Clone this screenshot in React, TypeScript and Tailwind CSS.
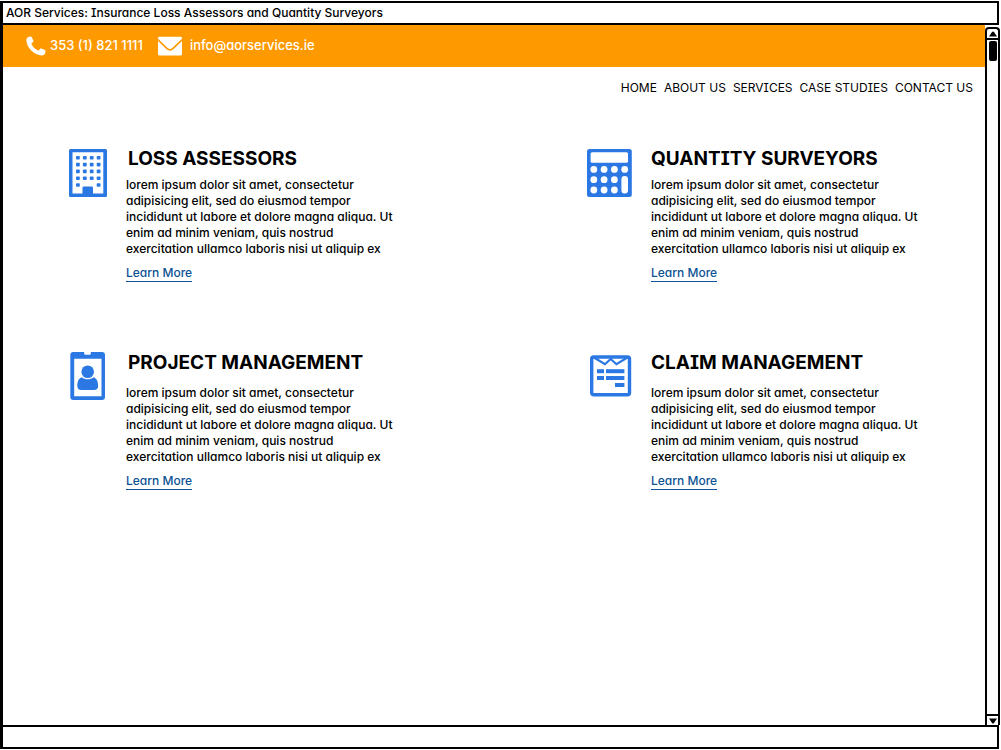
import type { ReactNode } from 'react';

const BLUE = '#2b78e4';

function BuildingIcon() {
  const windows: ReactNode[] = [];
  for (let row = 0; row < 5; row++) {
    for (let col = 0; col < 4; col++) {
      if (row === 4 && (col === 1 || col === 2)) continue;
      windows.push(
        <rect key={`${row}-${col}`} x={14 + col * 6.9} y={8 + row * 6.8} width="3.8" height="3.6" rx="0.8" fill={BLUE} />,
      );
    }
  }
  return (
    <svg viewBox="0 0 52 52" className="mt-px size-[52px] shrink-0" aria-hidden="true">
      <path fillRule="evenodd" fill={BLUE} d="M8.5 1h35A1.5 1.5 0 0 1 45 2.5v45a1.5 1.5 0 0 1-1.5 1.5h-35A1.5 1.5 0 0 1 7 47.5v-45A1.5 1.5 0 0 1 8.5 1zM10.5 4.200v41.300h10v-6a1 1 0 0 1 1-1h8.500a1 1 0 0 1 1 1v6h10.300V4.200z" />
      {windows}
    </svg>
  );
}

function CalculatorIcon() {
  const keys: ReactNode[] = [];
  for (let row = 0; row < 3; row++) {
    for (let col = 0; col < 4; col++) {
      if (col === 3 && row > 0) continue;
      keys.push(<circle key={`${row}-${col}`} cx={6.8 + col * 10.3} cy={21.4 + row * 10.3} r="3.4" fill="#fff" />);
    }
  }
  return (
    <svg viewBox="0 0 52 52" className="mt-px size-[52px] shrink-0" aria-hidden="true">
      <rect x="0" y="1" width="44.8" height="48" rx="2.5" fill={BLUE} />
      <rect x="3.6" y="4.2" width="37.4" height="10.6" rx="1.5" fill="#fff" />
      {keys}
      <rect x="34.4" y="28" width="6.6" height="17.4" rx="3.2" fill="#fff" />
    </svg>
  );
}

function BadgeIcon() {
  return (
    <svg viewBox="0 0 52 52" className="size-[52px] shrink-0" aria-hidden="true">
      <path fillRule="evenodd" fill={BLUE} d="M11 1h11.200v1.700a1 1 0 0 0 1 1h4.600a1 1 0 0 0 1-1V1H40a3 3 0 0 1 3 3v42a3 3 0 0 1-3 3H11.300a3 3 0 0 1-3-3V4a3 3 0 0 1 2.700-3zM12.200 7.800v37.400h27.300V7.800z" />
      <circle cx="25.7" cy="20.7" r="6.3" fill={BLUE} />
      <path fill={BLUE} d="M19.800 26.200c3.400 2.700 8.400 2.700 11.800 0 3.100 1 4.500 4.200 4.500 8.700 0 2.500-1.500 4-4 4H19.300c-2.500 0-4-1.500-4-4 0-4.500 1.400-7.700 4.500-8.700z" />
    </svg>
  );
}

function ClaimIcon() {
  return (
    <svg viewBox="0 0 52 52" className="size-[52px] shrink-0" aria-hidden="true">
      <rect x="4.7" y="6" width="37.8" height="37.8" rx="2" fill="none" stroke={BLUE} strokeWidth="3.4" />
      <path d="M6.500 6.200l11.500 7 5.700-5.200 5.700 5.200 11.500-7" fill="none" stroke={BLUE} strokeWidth="2.2" />
      <g fill={BLUE}>
        <rect x="10" y="18.2" width="7" height="4" />
        <rect x="19" y="18.2" width="18.4" height="4" />
        <rect x="10" y="25" width="7" height="4" />
        <rect x="19" y="25" width="18.4" height="4" />
        <rect x="28" y="32" width="9.4" height="4" />
      </g>
    </svg>
  );
}

function PhoneIcon() {
  return (
    <svg viewBox="0 0 20 20" className="size-5" aria-hidden="true">
      <path fill="#fff" d="M4.300.5c.6-.2 1 0 1.300.5l1.800 3.600c.3.600.2 1.100-.3 1.500L5.300 7.500c1.100 3 4.100 6 7.200 7.200l1.400-1.800c.4-.5.900-.6 1.500-.4l3.500 1.600c.6.300.8.800.6 1.400l-.4 1.800c-.5 1.600-1.700 2.100-3.300 2.100C8.200 19.300.5 11.700.4 4.300.4 2.600 1 1.500 2.500 1z" />
    </svg>
  );
}

function MailIcon() {
  return (
    <svg viewBox="0 0 24 20" className="h-5 w-6" aria-hidden="true">
      <path fill="#fff" d="M1.200.7h21.600A1.200 1.200 0 0 1 24 1.900v.8l-9.700 9.200c-1.500 1.300-3.100 1.300-4.600 0L0 2.700v-.8A1.200 1.200 0 0 1 1.200.7zM0 5l8.600 8.200c2.200 1.900 4.600 1.900 6.800 0L24 5v13a1.500 1.500 0 0 1-1.500 1.500h-21A1.500 1.500 0 0 1 0 18z" />
    </svg>
  );
}

const NAV = ['HOME', 'ABOUT US', 'SERVICES', 'CASE STUDIES', 'CONTACT US'];

const COPY = `lorem ipsum dolor sit amet, consectetur
adipisicing elit, sed do eiusmod tempor
incididunt ut labore et dolore magna aliqua. Ut
enim ad minim veniam, quis nostrud
exercitation ullamco laboris nisi ut aliquip ex`;

const SERVICES = [
  { title: 'LOSS ASSESSORS', icon: <BuildingIcon /> },
  { title: 'QUANTITY SURVEYORS', icon: <CalculatorIcon /> },
  { title: 'PROJECT MANAGEMENT', icon: <BadgeIcon /> },
  { title: 'CLAIM MANAGEMENT', icon: <ClaimIcon /> },
];

function Service({ title, icon }: { title: string; icon: ReactNode }) {
  return (
    <article className="group flex gap-3">
      {icon}
      <div className="min-w-0">
        <h2 className="text-[19px] leading-6 font-bold whitespace-nowrap group-odd:pl-0.5">{title}</h2>
        <p className="mt-1.5 text-[12px] leading-4 font-medium whitespace-pre group-nth-[n+3]:mt-2.5">{COPY}</p>
        <a href="#" className="mt-2 inline-block border-b border-[#0b5394] text-[12px] leading-4 font-medium text-[#0b5394]">
          Learn More
        </a>
      </div>
    </article>
  );
}

export default function App() {
  return (
    <div className="flex min-h-screen flex-col bg-white pt-px font-['Inter','Liberation_Sans',sans-serif] text-black [font-feature-settings:'cv08','cv11']">
      <header className="mr-0.5 border-2 border-l-3 border-black px-[3px] text-[12px] leading-5 font-medium">
        AOR Services: Insurance Loss Assessors and Quantity Surveyors
      </header>

      <div className="flex grow">
        <div className="min-w-0 grow border-l-3 border-black">
          <div className="flex h-[42px] items-center bg-[#ff9900] pb-px pl-[23px] text-[13px] leading-5 font-medium text-white">
            <PhoneIcon />
            <span className="ml-1 pb-0.5">353 (1) 821 1111</span>
            <span className="ml-[15px]">
              <MailIcon />
            </span>
            <a href="mailto:info@aorservices.ie" className="ml-2 pb-0.5">info@aorservices.ie</a>
          </div>

          <nav className="mt-[13px] flex justify-end gap-[7px] pr-3 text-[12px] leading-4 font-normal">
            {NAV.map((label) => (
              <a key={label} href="#">{label}</a>
            ))}
          </nav>

          <main className="mt-[51px] grid grid-cols-2 gap-x-[165px] gap-y-[68px] pr-[38px] pl-[59px]">
            {SERVICES.map((service) => (
              <Service key={service.title} {...service} />
            ))}
          </main>
        </div>

        <div className="mt-0.5 mr-px flex w-[15px] flex-col items-center rounded-t-sm border-2 border-b-0 border-black">
          <button type="button" aria-label="Scroll up" className="flex h-[11px] w-full items-center justify-center border-b-2 border-black">
            <svg viewBox="0 0 8 6" className="h-1.5 w-2" aria-hidden="true">
              <path d="M3 1Q4 0 5 1l3 4.500H0z" />
            </svg>
          </button>
          <div className="mt-px h-5 w-2 rounded-xs bg-black" />
          <button type="button" aria-label="Scroll down" className="mt-auto flex h-[11px] w-full items-center justify-center border-t-2 border-black">
            <svg viewBox="0 0 8 6" className="h-1.5 w-2" aria-hidden="true">
              <path d="M0 .5h8L5 5Q4 6 3 5z" />
            </svg>
          </button>
        </div>
      </div>

      <footer className="mr-0.5 mb-px h-6 border-2 border-l-3 border-black" />
    </div>
  );
}
